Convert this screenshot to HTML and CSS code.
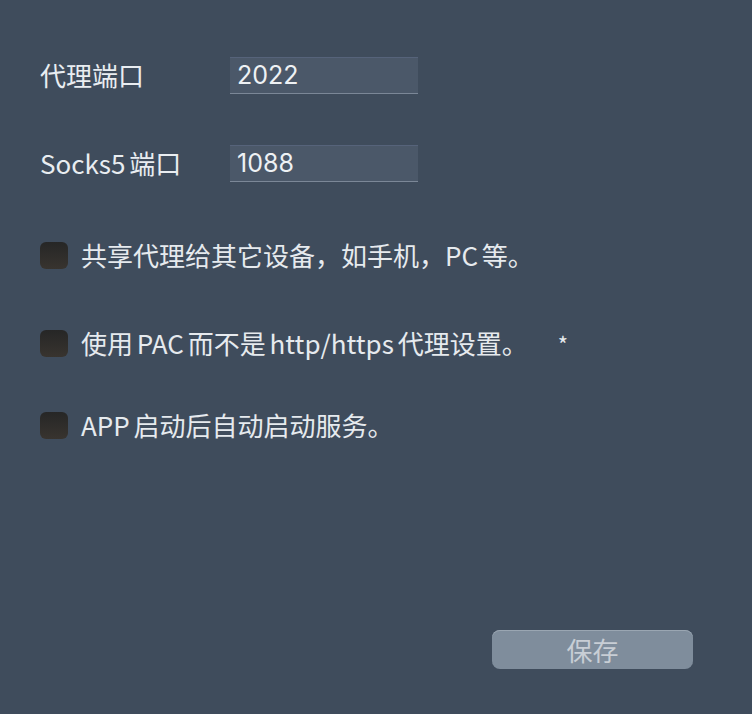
FILE: index.html
```html
<!DOCTYPE html>
<html lang="zh">
<head>
<meta charset="utf-8">
<link rel="stylesheet" href="styles.css">
</head>
<body>
<div class="panel">
  <div class="row field-row">
    <span class="label">代理端口</span>
    <div class="input">2022</div>
  </div>
  <div class="row field-row second">
    <span class="label">Socks5 端口</span>
    <div class="input">1088</div>
  </div>
  <div class="row check-row c1">
    <span class="check"></span>
    <span class="text">共享代理给其它设备，如手机，PC 等。</span>
  </div>
  <div class="row check-row c2">
    <span class="check"></span>
    <span class="text">使用 PAC 而不是 http/https 代理设置。</span>
    <span class="star">*</span>
  </div>
  <div class="row check-row c3">
    <span class="check"></span>
    <span class="text">APP 启动后自动启动服务。</span>
  </div>
  <div class="footer">
    <div class="btn">保存</div>
  </div>
</div>
</body>
</html>
```

FILE: styles.css
```css
html, body {
  margin: 0;
  padding: 0;
  background: #3f4c5c;
  width: 752px;
  height: 714px;
  overflow: hidden;
}
.panel {
  box-sizing: border-box;
  height: 714px;
  padding: 57px 0 0 40px;
  display: flex;
  flex-direction: column;
  font-family: "Noto Sans CJK SC", "Noto Sans", sans-serif;
  color: #e9edf1;
}
.row {
  display: flex;
  align-items: center;
  height: 36px;
}
.label {
  width: 190px;
  font-size: 26px;
  line-height: 36px;
  word-spacing: -2px;
}
.field-row.second {
  margin-top: 52px;
}
.input {
  box-sizing: border-box;
  width: 188px;
  height: 37px;
  background: #4b5869;
  border-top: 1px solid #56637a;
  border-bottom: 1px solid #7b8797;
  padding-left: 7px;
  font-size: 25px;
  line-height: 35px;
  color: #eef1f4;
  font-family: "Inter", "Noto Sans", sans-serif;
}
.check-row.c1 { margin-top: 56px; }
.check-row.c2 { margin-top: 52px; }
.check-row.c3 { margin-top: 46px; }
.check {
  width: 28px;
  height: 27px;
  border-radius: 6px;
  background: linear-gradient(#262626, #38342f);
  margin-right: 13px;
  flex: none;
}
.text {
  font-size: 26px;
  line-height: 36px;
  color: #e6eaee;
  word-spacing: -2px;
}
.star {
  margin-left: 30px;
  font-size: 22px;
  color: #e6eaee;
}
.footer {
  margin-top: auto;
  margin-bottom: 45px;
  display: flex;
  padding-left: 452px;
}
.btn {
  width: 201px;
  height: 39px;
  border-radius: 8px;
  background: #7f8d9c;
  box-shadow: inset 0 1px 0 #9aa6b2;
  color: #c8ced5;
  font-size: 26px;
  line-height: 39px;
  text-align: center;
}
```
